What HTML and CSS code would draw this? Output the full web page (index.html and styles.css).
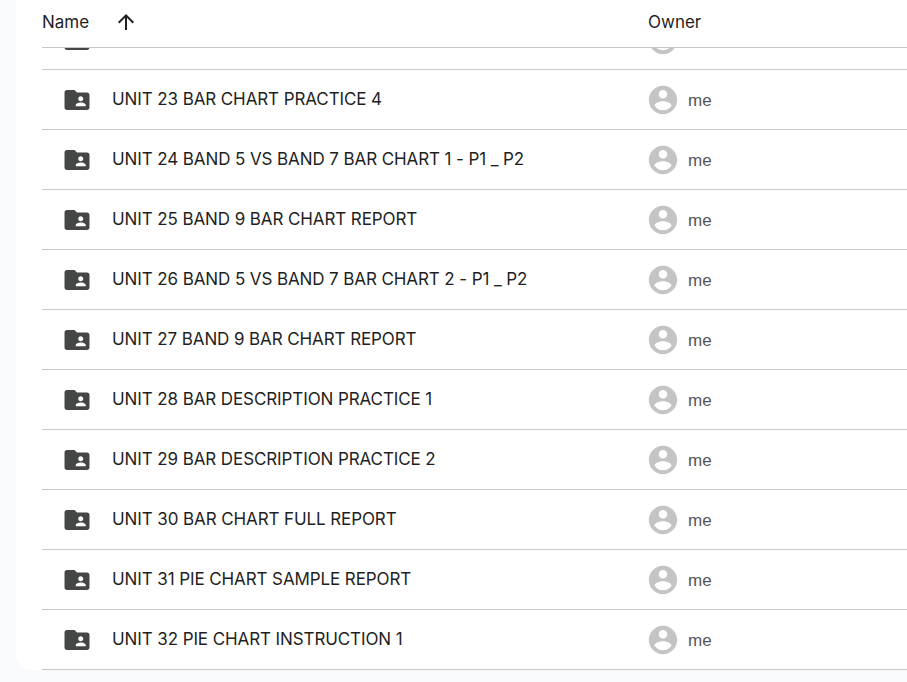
FILE: index.html
```html
<!DOCTYPE html>
<html lang="en">
<head>
    <meta charset="UTF-8">
    <title>Drive folder list</title>
    <link rel="stylesheet" href="styles.css">
</head>
<body>
    <svg class="icon-defs" width="0" height="0">
        <symbol id="folderShared" viewBox="0 0 24 24">
            <path d="M20 6h-8l-2-2H4c-1.1 0-1.99.9-1.99 2L2 18c0 1.1.9 2 2 2h16c1.1 0 2-.9 2-2V8c0-1.1-.9-2-2-2zm-5 3c1.1 0 2 .9 2 2s-.9 2-2 2-2-.9-2-2 .9-2 2-2zm4 8h-8v-1c0-1.33 2.67-2 4-2s4 .67 4 2v1z"/>
        </symbol>
        <symbol id="accountCircle" viewBox="0 0 24 24">
            <path d="M12 2C6.48 2 2 6.48 2 12s4.48 10 10 10 10-4.48 10-10S17.52 2 12 2zm0 3c1.66 0 3 1.34 3 3s-1.34 3-3 3-3-1.34-3-3 1.34-3 3-3zm0 14.2c-2.5 0-4.71-1.28-6-3.22.03-1.99 4-3.08 6-3.08 1.99 0 5.97 1.09 6 3.08-1.29 1.94-3.5 3.22-6 3.22z"/>
        </symbol>
    </svg>

    <main class="card">
        <!-- Column headers -->
        <header class="list-header">
            <div class="col-name">
                <span>Name</span>
                <svg class="sort-arrow" viewBox="0 0 24 24"><path d="M4 12l1.41 1.41L11 7.83V20h2V7.83l5.58 5.59L20 12l-8-8-8 8z"/></svg>
            </div>
            <div class="col-owner">Owner</div>
        </header>

        <!-- Rows, scrolled so the first one is cut off by the header -->
        <div class="list-body">
            <div class="row row-scrolled">
                <div class="col-name">
                    <svg class="folder-icon"><use href="#folderShared"/></svg>
                </div>
                <div class="col-owner">
                    <svg class="avatar"><use href="#accountCircle"/></svg>
                </div>
            </div>
            <div class="row">
                <div class="col-name">
                    <svg class="folder-icon"><use href="#folderShared"/></svg>
                    <span class="file-name">UNIT 23 BAR CHART PRACTICE 4</span>
                </div>
                <div class="col-owner">
                    <svg class="avatar"><use href="#accountCircle"/></svg>
                    <span class="owner-name">me</span>
                </div>
            </div>
            <div class="row">
                <div class="col-name">
                    <svg class="folder-icon"><use href="#folderShared"/></svg>
                    <span class="file-name">UNIT 24 BAND 5 VS BAND 7 BAR CHART 1 - P1 _ P2</span>
                </div>
                <div class="col-owner">
                    <svg class="avatar"><use href="#accountCircle"/></svg>
                    <span class="owner-name">me</span>
                </div>
            </div>
            <div class="row">
                <div class="col-name">
                    <svg class="folder-icon"><use href="#folderShared"/></svg>
                    <span class="file-name">UNIT 25 BAND 9 BAR CHART REPORT</span>
                </div>
                <div class="col-owner">
                    <svg class="avatar"><use href="#accountCircle"/></svg>
                    <span class="owner-name">me</span>
                </div>
            </div>
            <div class="row">
                <div class="col-name">
                    <svg class="folder-icon"><use href="#folderShared"/></svg>
                    <span class="file-name">UNIT 26 BAND 5 VS BAND 7 BAR CHART 2 - P1 _ P2</span>
                </div>
                <div class="col-owner">
                    <svg class="avatar"><use href="#accountCircle"/></svg>
                    <span class="owner-name">me</span>
                </div>
            </div>
            <div class="row">
                <div class="col-name">
                    <svg class="folder-icon"><use href="#folderShared"/></svg>
                    <span class="file-name">UNIT 27 BAND 9 BAR CHART REPORT</span>
                </div>
                <div class="col-owner">
                    <svg class="avatar"><use href="#accountCircle"/></svg>
                    <span class="owner-name">me</span>
                </div>
            </div>
            <div class="row">
                <div class="col-name">
                    <svg class="folder-icon"><use href="#folderShared"/></svg>
                    <span class="file-name">UNIT 28 BAR DESCRIPTION PRACTICE 1</span>
                </div>
                <div class="col-owner">
                    <svg class="avatar"><use href="#accountCircle"/></svg>
                    <span class="owner-name">me</span>
                </div>
            </div>
            <div class="row">
                <div class="col-name">
                    <svg class="folder-icon"><use href="#folderShared"/></svg>
                    <span class="file-name">UNIT 29 BAR DESCRIPTION PRACTICE 2</span>
                </div>
                <div class="col-owner">
                    <svg class="avatar"><use href="#accountCircle"/></svg>
                    <span class="owner-name">me</span>
                </div>
            </div>
            <div class="row">
                <div class="col-name">
                    <svg class="folder-icon"><use href="#folderShared"/></svg>
                    <span class="file-name">UNIT 30 BAR CHART FULL REPORT</span>
                </div>
                <div class="col-owner">
                    <svg class="avatar"><use href="#accountCircle"/></svg>
                    <span class="owner-name">me</span>
                </div>
            </div>
            <div class="row">
                <div class="col-name">
                    <svg class="folder-icon"><use href="#folderShared"/></svg>
                    <span class="file-name">UNIT 31 PIE CHART SAMPLE REPORT</span>
                </div>
                <div class="col-owner">
                    <svg class="avatar"><use href="#accountCircle"/></svg>
                    <span class="owner-name">me</span>
                </div>
            </div>
            <div class="row">
                <div class="col-name">
                    <svg class="folder-icon"><use href="#folderShared"/></svg>
                    <span class="file-name">UNIT 32 PIE CHART INSTRUCTION 1</span>
                </div>
                <div class="col-owner">
                    <svg class="avatar"><use href="#accountCircle"/></svg>
                    <span class="owner-name">me</span>
                </div>
            </div>
        </div>
    </main>
</body>
</html>
```

FILE: styles.css
```css
/* Page */
body {
    margin: 0;
    height: 682px;
    overflow: hidden;
    background-color: #f8fafd;
    font-family: Inter, Roboto, "Liberation Sans", sans-serif;
    color: #1f1f1f;
}

.icon-defs {
    display: block;
    height: 0;
}

/* White sheet, open on the right */
.card {
    margin-left: 16px;
    height: 670px;
    padding-left: 26px;
    background-color: #fff;
    border-bottom-left-radius: 16px;
    overflow: hidden;
}

/* Header */
.list-header {
    display: flex;
    align-items: center;
    height: 44px;
    padding-bottom: 3px;
    border-bottom: 1px solid #c7c7c7;
    font-size: 17px;
    font-weight: 425;
    position: relative;
    background-color: #fff;
}

.col-name {
    display: flex;
    align-items: center;
    width: 606px;
    flex-shrink: 0;
}

.col-owner {
    display: flex;
    align-items: center;
}

.sort-arrow {
    width: 24px;
    height: 24px;
    margin-left: 25px;
    fill: #1f1f1f;
}

/* Rows */
.list-body {
    overflow: hidden;
}

.row {
    display: flex;
    align-items: center;
    height: 59px;
    border-bottom: 1px solid #c7c7c7;
}

.row-scrolled {
    margin-top: -38px;
}

.folder-icon {
    width: 30px;
    height: 30px;
    margin-top: 1px;
    margin-left: 20px;
    fill: #444746;
    flex-shrink: 0;
}

.file-name {
    margin-left: 20px;
    margin-bottom: 2px;
    font-size: 17px;
    font-weight: 425;
    letter-spacing: -0.1px;
}

.avatar {
    width: 34px;
    height: 34px;
    margin-top: 1px;
    margin-left: -2px;
    fill: #c4c4c4;
    flex-shrink: 0;
}

.owner-name {
    margin-left: 8px;
    margin-top: 2px;
    font-family: "Liberation Sans", sans-serif;
    font-size: 17px;
    color: #555;
}
```
